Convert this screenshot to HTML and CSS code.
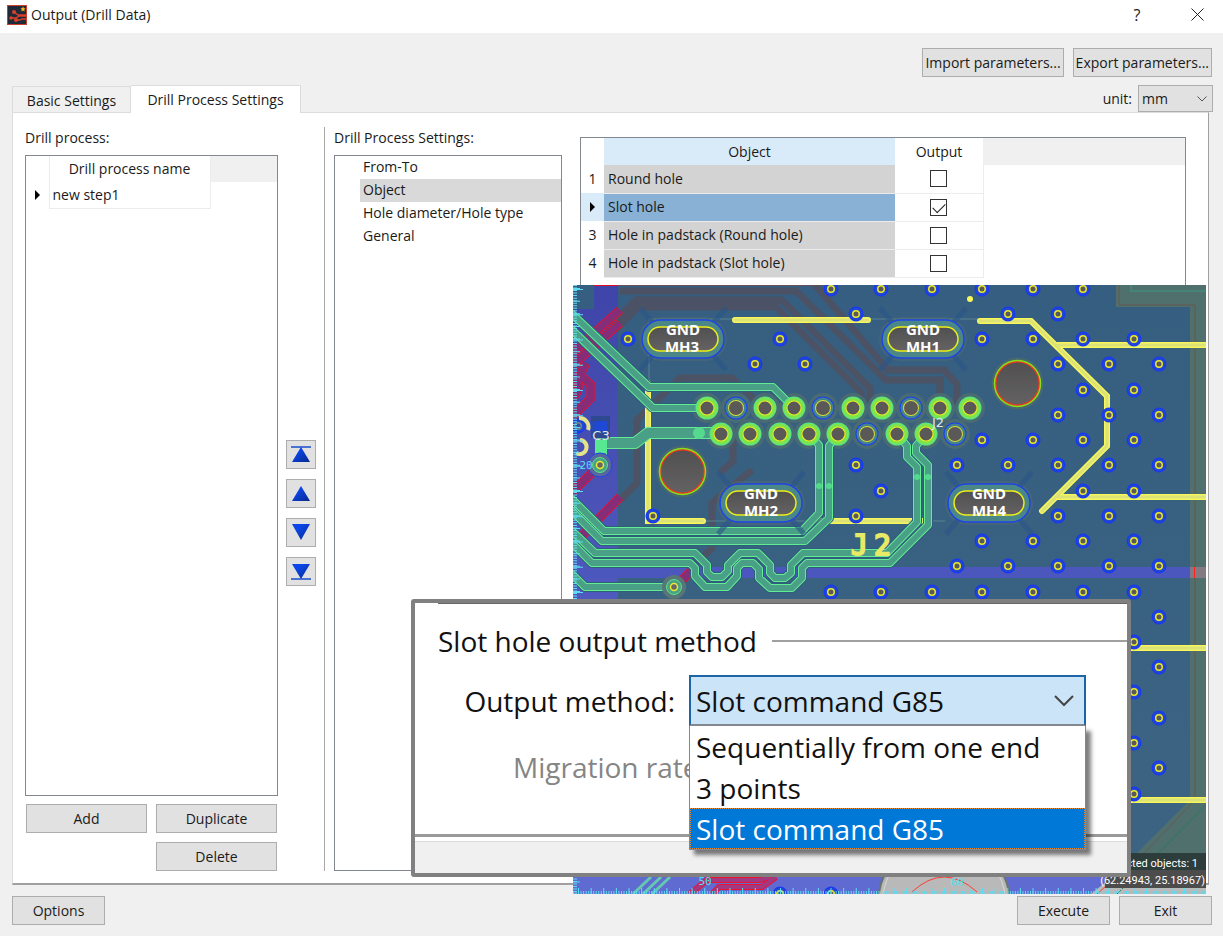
FILE: index.html
```html
<!DOCTYPE html>
<html lang="en">
<head>
    <meta charset="UTF-8">
    <meta name="viewport" content="width=device-width, initial-scale=1.0">
    <title>Output (Drill Data)</title>
    <link rel="stylesheet" href="styles.css">
</head>
<body>
    <header class="titlebar">
        <svg class="app-icon" viewBox="0 0 20 20">
            <rect x="0.5" y="0.5" width="19" height="19" fill="#202a36" stroke="#c8402f"/>
            <path d="M7 7l4 3h8M4 13h5l3-2h7M9 15h4l2-1h4" fill="none" stroke="#d8402c" stroke-width="1.3"/>
            <circle cx="7" cy="7" r="2" fill="#d8402c"/>
            <circle cx="4" cy="13" r="1.8" fill="#d8402c"/>
            <circle cx="9" cy="15" r="2" fill="#d8402c"/>
            <path d="M16 1.5l.8 1.6 1.7.3-1.2 1.2.3 1.8-1.6-.8-1.6.8.3-1.8-1.2-1.2 1.7-.3z" fill="#f5b51e"/>
        </svg>
        <h1 class="title">Output (Drill Data)</h1>
        <button type="button" class="title-btn" aria-label="Help">?</button>
        <button type="button" class="title-btn" aria-label="Close">
            <svg width="13" height="13" viewBox="0 0 13 13"><path d="M.5.5l12 12M12.5.5l-12 12" stroke="#222" fill="none"/></svg>
        </button>
    </header>

    <div class="toolbar">
        <button type="button" class="btn">Import parameters...</button>
        <button type="button" class="btn">Export parameters...</button>
    </div>

    <div class="tab-row">
        <button type="button" class="tab">Basic Settings</button>
        <button type="button" class="tab active">Drill Process Settings</button>
        <div class="unit">
            <label for="unit">unit:</label>
            <span class="select-wrap">
                <select id="unit" class="unit-select">
                    <option>mm</option>
                    <option>inch</option>
                </select>
                <svg class="chevron" width="10" height="6" viewBox="0 0 10 6"><path d="M.5.5L5 5 9.5.5" fill="none" stroke="#555"/></svg>
            </span>
        </div>
    </div>

    <main class="pane">
        <section class="process">
            <h2 class="label">Drill process:</h2>
            <div class="frame process-frame">
                <table class="grid process-grid">
                    <tr><th class="mark"></th><th class="name">Drill process name</th><th class="filler"></th></tr>
                    <tr><td class="mark"><span class="caret"></span></td><td class="name">new step1</td><td></td></tr>
                </table>
            </div>
            <div class="process-buttons">
                <button type="button" class="btn">Add</button>
                <button type="button" class="btn">Duplicate</button>
                <button type="button" class="btn second">Delete</button>
            </div>
        </section>

        <div class="movers">
            <button type="button" class="btn mover" aria-label="Move to top">
                <svg width="22" height="19" viewBox="0 0 22 19">
                    <defs>
                        <linearGradient id="blue" x1="0" y1="0" x2="1" y2="1">
                            <stop offset="0.3" stop-color="#0c46e8"/>
                            <stop offset="1" stop-color="#062a88"/>
                        </linearGradient>
                    </defs>
                    <path d="M1 2h20" stroke="#4b72d0" stroke-width="2"/><path d="M11 2l9 15H2z" fill="url(#blue)"/>
                </svg>
            </button>
            <button type="button" class="btn mover" aria-label="Move up">
                <svg width="22" height="19" viewBox="0 0 22 19"><path d="M11 2l9 15H2z" fill="url(#blue)"/></svg>
            </button>
            <button type="button" class="btn mover" aria-label="Move down">
                <svg width="22" height="19" viewBox="0 0 22 19"><path d="M11 17l9-16H2z" fill="url(#blue)"/></svg>
            </button>
            <button type="button" class="btn mover" aria-label="Move to bottom">
                <svg width="22" height="19" viewBox="0 0 22 19"><path d="M1 17h20" stroke="#4b72d0" stroke-width="2"/><path d="M11 17l9-15H2z" fill="url(#blue)"/></svg>
            </button>
        </div>

        <section class="settings">
            <h2 class="label">Drill Process Settings:</h2>
            <ul class="frame tree">
                <li>From-To</li>
                <li class="selected">Object</li>
                <li>Hole diameter/Hole type</li>
                <li>General</li>
            </ul>
        </section>

        <section class="frame objects">
            <table class="grid object-grid">
                <tr><th class="mark"></th><th class="object">Object</th><th class="output">Output</th><th class="filler"></th></tr>
                <tr><td class="mark">1</td><td class="object">Round hole</td><td class="output"><input type="checkbox" aria-label="Round hole"></td><td></td></tr>
                <tr class="current"><td class="mark"><span class="caret"></span></td><td class="object">Slot hole</td><td class="output"><input type="checkbox" aria-label="Slot hole" checked></td><td></td></tr>
                <tr><td class="mark">3</td><td class="object">Hole in padstack (Round hole)</td><td class="output"><input type="checkbox" aria-label="Hole in padstack (Round hole)"></td><td></td></tr>
                <tr><td class="mark">4</td><td class="object">Hole in padstack (Slot hole)</td><td class="output"><input type="checkbox" aria-label="Hole in padstack (Slot hole)"></td><td></td></tr>
            </table>
        </section>
    </main>

    <footer class="footer">
        <button type="button" class="btn">Options</button>
        <button type="button" class="btn push">Execute</button>
        <button type="button" class="btn">Exit</button>
    </footer>

    <!-- board view -->
    <svg class="board" viewBox="573 285 633 609">
        <defs>
            <linearGradient id="hole" x1="0" y1="0" x2="0" y2="1">
                <stop offset="0" stop-color="#515051"/>
                <stop offset="1" stop-color="#646262"/>
            </linearGradient>
            <linearGradient id="base" x1="0" y1="0" x2="0" y2="1">
                <stop offset="0" stop-color="#355e80"/>
                <stop offset="1" stop-color="#3d6482"/>
            </linearGradient>
            <linearGradient id="violet" x1="0" y1="0" x2="0" y2="1">
                <stop offset="0" stop-color="#3f45a8"/>
                <stop offset="1" stop-color="#5f6bd2"/>
            </linearGradient>
            <path id="vias" d="M831 289h0M881 289h0M932 289h0M982 289h0M1033 289h0M1083 289h0
                M856 314h0M1008 314h0M1058 314h0
                M628 339h0M780 339h0M982 339h0M1033 339h0M1083 339h0M1134 339h0
                M755 364h0M805 364h0M1058 364h0M1109 364h0M1159 364h0
                M1083 390h0M1134 390h0
                M1058 415h0M1109 415h0M1159 415h0
                M982 440h0M1033 440h0M1083 440h0M1134 440h0
                M856 465h0M957 465h0M1008 465h0M1058 465h0M1109 465h0M1159 465h0
                M881 491h0M1083 491h0M1134 491h0
                M653 516h0M856 516h0M1058 516h0M1109 516h0M1159 516h0
                M982 541h0M1033 541h0M1083 541h0M1134 541h0
                M957 566h0M1008 566h0M1058 566h0M1109 566h0M1159 566h0
                M831 592h0M881 592h0M932 592h0M982 592h0M1033 592h0M1083 592h0M1134 592h0
                M1159 617h0M1134 642h0M1159 667h0M1134 692h0M1159 718h0M1134 743h0M1159 768h0M1134 794h0
                M578 426h0M780 894h0M831 894h0"/>
            <path id="pads" d="M707 408h0M765 408h0M794 408h0M853 408h0M882 408h0M940 408h0M970 408h0
                M721 434h0M750 434h0M780 434h0M809 434h0M838 434h0M897 434h0M926 434h0"/>
            <path id="blue-pads" d="M736 408h0M823 408h0M911 408h0M867 434h0M955 434h0"/>
            <path id="traces" d="M571 313L649 387H773L794 408
                M571 329L653 408H707
                M571 498L604 531H802L819 513V445L809 434
                M571 510L602 541H805L829 518V446L838 434
                M571 530L595 553H695L707 565V572L712 577H722L728 571V565L740 553H758L770 565V573L775 578H785L791 573V565L803 553H887L917 522V467L907 457V446L897 434
                M571 542L592 563H690L695 568V576L705 587H727L737 576V568L742 563H753L759 569V578L770 588H792L802 578V568L807 563H890L928 525V465L916 453V446L926 434
                M571 573L585 587H674"/>
            <path id="wide-trace" d="M601 462V443H635L648 433H714"/>
            <path id="dim-traces" d="M612 324L636 300H782L870 388V405
                M615 330L638 307H776L861 392V405
                M620 291H796L886 380H940V405M815 285L888 370H944L957 384V405
                M733 434V461L720 473M752 470L712 503V548L695 565M637 460V420L680 378H732L755 400M637 460V483L620 500"/>
            <path id="red-traces" d="M573 352L620 310M573 365L620 323M586 363L580 375L591 385V398L573 416M573 375A14 14 0 0 1 573 397
                M571 493L598 467M571 547L620 497M678 584L697 565"/>
            <path id="outline" d="M735 320H868M980 321H1031L1107 396V446L1042 511M1058 345H1210M1058 497H1210M648 383V521H703M814 521H930M1120 648H1210M1120 800H1210"/>
            <g id="slot">
                <rect x="-3" y="-3" width="88" height="44" rx="22" fill="#506c70" opacity=".5"/>
                <path d="M10 2L-2-12M72 2L84-12M10 36L-2 50M72 36L84 50" stroke="#2b5689" stroke-width="5" opacity=".6"/>
                <rect width="82" height="38" rx="19" fill="#4b8787" stroke="#1f45e6" stroke-width="1.500"/>
                <rect x="6" y="7" width="70" height="24" rx="12" fill="url(#hole)" stroke="#efee16" stroke-width="1.500"/>
            </g>
        </defs>
        <rect x="573" y="285" width="633" height="609" fill="url(#base)"/>
        <rect x="573" y="285" width="45" height="609" fill="url(#violet)"/>
        <rect x="573" y="285" width="21" height="24" fill="#355e80"/>
        <path d="M594 285.500H618" stroke="#e01024"/>
        <path d="M618 285.500H822" stroke="#65505c"/>
        <rect x="573" y="567" width="617" height="11" fill="#4b57bd"/>
        <rect x="573" y="877" width="633" height="17" fill="#606bd2"/>
        <path d="M1116 285H1206V870H1120L1190 800V307H1116z" fill="#4f706d"/>
        <path d="M1119 285V305H1195V800L1131 867" fill="none" stroke="#6b5753" stroke-width="1"/>
        <path d="M1131 285V291H1206" fill="none" stroke="#458577" stroke-width="2"/>
        <path d="M1206 805L1142 870" stroke="#28785f"/>
        <rect x="1190" y="567" width="16" height="11" fill="#827b82"/>
        <path d="M1194.500 567V578" stroke="#ff2020"/>
        <g fill="none">
            <use href="#dim-traces" stroke="#544f5c" stroke-width="7" opacity=".75"/>
            <use href="#red-traces" stroke="#e01433" stroke-width="9"/>
            <use href="#red-traces" stroke="#852d78" stroke-width="7"/>
        </g>
        <path d="M649 319H1031L1107 396V446L1040 514M649 319V521H945" fill="none" stroke="#5b8290"/>
        <g fill="none" stroke-linecap="round">
            <g stroke="#496c72" stroke-width="30"><use href="#pads"/><use href="#blue-pads"/></g>
            <use href="#outline" stroke="#f7f75c" stroke-width="6"/>
            <use href="#outline" stroke="#dce276" stroke-width="3"/>
            <use href="#vias" stroke="#1b39f0" stroke-width="15"/>
            <use href="#vias" stroke="#2149cf" stroke-width="12"/>
            <use href="#vias" stroke="#ece92c" stroke-width="8"/>
            <use href="#vias" stroke="#59595a" stroke-width="5"/>
        </g>
        <g fill="none" stroke-linejoin="round">
            <use href="#traces" stroke="#2f5d7c" stroke-width="10"/>
            <use href="#traces" stroke="#64ec94" stroke-width="8"/>
            <use href="#traces" stroke="#4aa086" stroke-width="6"/>
            <use href="#wide-trace" stroke="#64ec94" stroke-width="12"/>
            <use href="#wide-trace" stroke="#4aa086" stroke-width="10"/>
        </g>
        <g fill="#55d98e">
            <circle cx="699" cy="433" r="6"/>
            <circle cx="819" cy="486" r="3"/><circle cx="829" cy="486" r="3"/>
            <circle cx="917" cy="477" r="3"/><circle cx="928" cy="477" r="3"/>
        </g>
        <g fill="none" stroke-linecap="round">
            <use href="#pads" stroke="#55e58c" stroke-width="23"/>
            <use href="#pads" stroke="#7de44c" stroke-width="21"/>
            <use href="#pads" stroke="#f0ee20" stroke-width="15"/>
            <use href="#pads" stroke="#5b5957" stroke-width="13"/>
            <use href="#blue-pads" stroke="#1d3ff0" stroke-width="23"/>
            <use href="#blue-pads" stroke="#43828c" stroke-width="21"/>
            <use href="#blue-pads" stroke="#d8dd34" stroke-width="16"/>
            <use href="#blue-pads" stroke="#5b5957" stroke-width="14"/>
        </g>
        <circle cx="1017.500" cy="383.500" r="26" fill="#48696f"/>
        <circle cx="1017.500" cy="383.500" r="22" fill="url(#hole)" stroke="#ee3322" stroke-width="2"/>
        <circle cx="1017.500" cy="383.500" r="23" fill="none" stroke="#86df18" stroke-width="1.500"/>
        <circle cx="682.500" cy="471.500" r="26" fill="#48696f"/>
        <circle cx="682.500" cy="471.500" r="22" fill="url(#hole)" stroke="#ee3322" stroke-width="2"/>
        <circle cx="682.500" cy="471.500" r="23" fill="none" stroke="#86df18" stroke-width="1.500"/>
        <circle cx="970" cy="299" r="3" fill="#f7f75c"/>
        <use href="#slot" x="642" y="320"/>
        <use href="#slot" x="882" y="320"/>
        <use href="#slot" x="720" y="484"/>
        <use href="#slot" x="948" y="484"/>

        <!-- C3 and the two free ends -->
        <rect x="591" y="416" width="19" height="22" fill="#2f4990"/>
        <rect x="596" y="421" width="11" height="10" fill="#1f49d5"/>
        <path d="M573 426H596" stroke="#2149d5" stroke-width="9" opacity=".6"/>
        <path d="M579 418A9 9 0 0 1 588 430M580 440A7 7 0 1 1 576 453" fill="none" stroke="#e5e38a" stroke-width="4"/>
        <rect x="595" y="440" width="12" height="13" fill="#58e892"/>
        <circle cx="600" cy="465" r="12" fill="#57699b" stroke="#2342f0"/>
        <circle cx="600" cy="465" r="7.500" fill="#4aa284" stroke="#5be28e"/>
        <circle cx="600" cy="465" r="3.500" fill="#686666" stroke="#ece92c" stroke-width="1.500"/>
        <circle cx="674" cy="587" r="12" fill="#587675"/>
        <circle cx="674" cy="587" r="7.500" fill="#4aa284" stroke="#5be28e"/>
        <circle cx="674" cy="587" r="3.500" fill="#686666" stroke="#ece92c" stroke-width="1.500"/>

        <!-- bottom strip -->
        <path d="M633 894L651 877M643 894L661 877M652 894L670 877" stroke="#62c9b0" stroke-width="3"/>
        <g fill="none">
            <path d="M690 894L707 880H760L770 877M712 894L719 887H762L776 877" stroke="#ec1230" stroke-width="6"/>
            <path d="M690 894L707 880H760L770 877M712 894L719 887H762L776 877" stroke="#a13a80" stroke-width="4"/>
        </g>
        <circle cx="944" cy="904" r="66" fill="#b9b9b9" stroke="#68746c" stroke-width="2"/>
        <circle cx="944" cy="904" r="62" fill="none" stroke="#d9dbd2"/>
        <path d="M912 892Q944 862 977 892" fill="none" stroke="#ff3b30"/>
        <path d="M1091 894L1112 877H1206V894z" fill="#b9b9b9"/>
        <path d="M1097 894L1116 877" stroke="#ff3b30"/>
        <path d="M1117 894L1134 877" stroke="#28785f"/>

        <!-- rulers -->
        <g stroke="#5cdcf0" fill="none">
            <path d="M575 285V894" stroke-width="4" stroke-dasharray="1 1.525"/>
            <path d="M576.500 288V894" stroke-width="7" stroke-dasharray="1 11.625"/>
            <path d="M578 288V894" stroke-width="10" stroke-dasharray="1 24.250" stroke-dashoffset="-1"/>
            <path d="M573 892.500H1206" stroke-width="3" stroke-dasharray="1 1.525"/>
            <path d="M578 891H1206" stroke-width="6" stroke-dasharray="1 11.625"/>
        </g>

        <g class="silk">
            <text x="683" y="335">GND</text><text x="682" y="352">MH3</text>
            <text x="923" y="335">GND</text><text x="923" y="352">MH1</text>
            <text x="761" y="499">GND</text><text x="761" y="516">MH2</text>
            <text x="989" y="499">GND</text><text x="989" y="516">MH4</text>
        </g>
        <text class="ref" x="601" y="440">C3</text>
        <text class="ref" x="938" y="427">J2</text>
        <text class="big-ref" x="851 874" y="555">J2</text>
        <text class="tick" x="586" y="469">20</text>
        <text class="tick" x="705" y="885">50</text>
        <text class="tick" x="957" y="886">60</text>
        <rect x="1060" y="853" width="146" height="17" fill="#2c3d3c"/>
        <rect x="1105" y="870" width="101" height="18" fill="#4c4c4c"/>
        <text class="status" x="1198" y="867">Selected objects: 1</text>
        <text class="status" x="1205" y="884">(62.24943, 25.18967)</text>
    </svg>

    <!-- enlarged slot hole settings -->
    <section class="callout">
        <div class="callout-body">
            <h2 class="group-title">Slot hole output method</h2>
            <div class="method-row">
                <label for="method">Output method:</label>
                <div class="method-box">
                    <select id="method" class="method-select">
                        <option>Sequentially from one end</option>
                        <option>3 points</option>
                        <option selected>Slot command G85</option>
                    </select>
                    <svg class="chevron" width="20" height="12" viewBox="0 0 20 12"><path d="M1 1l9 9 9-9" fill="none" stroke="#444" stroke-width="2"/></svg>
                    <ul class="method-list">
                        <li>Sequentially from one end</li>
                        <li>3 points</li>
                        <li class="chosen">Slot command G85</li>
                    </ul>
                </div>
            </div>
            <div class="rate-row">Migration rate</div>
        </div>
        <div class="callout-foot"></div>
    </section>
</body>
</html>
```
FILE: styles.css
```css
* {
    box-sizing: border-box;
}

body {
    position: relative;
    display: flex;
    flex-direction: column;
    min-height: 100vh;
    margin: 0;
    background-color: #f0f0f0;
    color: #1a1a1a;
    font-family: "Open Sans", "Noto Sans", sans-serif;
    font-size: 14px;
    line-height: 22px;
}

button, select {
    font: inherit;
    color: inherit;
}

h1, h2 {
    margin: 0;
    font-size: 14px;
    font-weight: normal;
}

ul {
    margin: 0;
    padding: 0;
    list-style: none;
}

.titlebar {
    display: flex;
    align-items: center;
    height: 33px;
    padding: 0 10px 4px 7px;
    background-color: #ffffff;
}

.app-icon {
    width: 20px;
    height: 20px;
    margin-right: 4px;
}

.title {
    flex: 1;
}

.title-btn {
    display: flex;
    align-items: center;
    justify-content: center;
    width: 32px;
    margin-left: 28px;
    padding: 0;
    border: none;
    background: none;
    font-size: 16px;
}

.btn {
    height: 29px;
    padding: 1px 2px 0;
    border: 1px solid #adadad;
    background-color: #e1e1e1;
    white-space: nowrap;
}

.toolbar {
    display: flex;
    justify-content: flex-end;
    gap: 9px;
    padding: 15px 11px 8px;
}

.tab-row {
    display: flex;
    align-items: flex-end;
    padding: 0 10px 0 12px;
}

.tab {
    width: 119px;
    height: 26px;
    padding: 2px 0 0;
    border: 1px solid #dcdcdc;
    border-bottom: none;
    background-color: #f0f0f0;
}

.tab.active {
    z-index: 1;
    width: 170px;
    height: 28px;
    margin-bottom: -1px;
    padding: 0;
    border-left: none;
    background-color: #ffffff;
}

.unit {
    display: flex;
    align-items: center;
    gap: 6px;
    margin-left: auto;
}

.select-wrap {
    position: relative;
}

.chevron {
    position: absolute;
    top: 50%;
    right: 6px;
    margin-top: -3px;
    pointer-events: none;
}

.unit-select {
    display: block;
    width: 75px;
    height: 27px;
    padding: 1px 3px 0;
    border: 1px solid #adadad;
    border-radius: 0;
    background-color: #e1e1e1;
    appearance: none;
}

.pane {
    display: flex;
    flex: 1;
    margin: 0 14px 0 12px;
    padding: 14px 22px 12px 12px;
    border: 1px solid #dcdcdc;
    border-right-color: #a0a0a0;
    border-bottom: 2px solid #a0a0a0;
    background-color: #ffffff;
}

.label {
    margin-bottom: 6px;
}

.frame {
    border: 1px solid #828790;
    background-color: #ffffff;
}

.process {
    display: flex;
    flex-direction: column;
    width: 253px;
}

.process-frame {
    flex: 1;
}

.grid {
    width: 100%;
    border-collapse: collapse;
    table-layout: fixed;
}

.grid th {
    font-weight: normal;
}

.grid th, .grid td {
    padding: 0;
}

.grid .filler {
    background-color: #f0f0f0;
}

.grid .mark {
    width: 23px;
    text-align: center;
}

.caret {
    display: inline-block;
    border: 5px solid transparent;
    border-right: none;
    border-left-color: #000000;
}

.process-grid tr {
    height: 26px;
}

.process-grid .name {
    width: 161px;
    border: solid #ececec;
    border-width: 0 1px;
}

.process-grid td.name {
    padding-left: 3px;
    border-bottom-width: 1px;
}

.process-buttons {
    display: grid;
    grid-template-columns: 1fr 1fr;
    gap: 9px;
    padding: 8px 1px 0;
}

.second {
    grid-column: 2;
}

.movers {
    display: flex;
    flex-direction: column;
    justify-content: center;
    gap: 10px;
    padding: 28px 8px 0;
}

.mover {
    display: flex;
    align-items: center;
    justify-content: center;
    width: 30px;
    padding: 0;
}

.settings {
    display: flex;
    flex-direction: column;
    width: 238px;
    padding-left: 9px;
    border-left: 1px solid #a8a8a8;
}

.tree {
    flex: 1;
}

.tree li {
    height: 23px;
    margin-left: 25px;
    padding-left: 3px;
}

.tree .selected {
    background-color: #d9d9d9;
}

.objects {
    flex: 1;
    margin: 10px 0 0 18px;
}

.object-grid tr {
    height: 28px;
}

.object-grid tr:first-child {
    height: 27px;
}

.object-grid .object {
    width: 291px;
}

.object-grid th.object, .current .mark {
    background-color: #d9ebf9;
}

.object-grid td.object {
    padding-left: 4px;
    border-bottom: 1px solid #ececec;
    background-color: #d3d3d3;
}

.object-grid .current .object {
    background-color: #88b1d5;
}

.object-grid .output {
    width: 88px;
    text-align: center;
}

.object-grid td.output {
    border: solid #ececec;
    border-width: 0 1px 1px 0;
}

.output input {
    display: block;
    width: 17px;
    height: 17px;
    margin: 0 auto;
    border: 1px solid #333333;
    background-color: #ffffff;
    appearance: none;
}

.output input:checked::after {
    content: "";
    display: block;
    width: 11px;
    height: 6px;
    margin: 3px 0 0 2px;
    border: solid #222222;
    border-width: 0 0 1px 1px;
    transform: rotate(-45deg);
}

.footer {
    display: flex;
    gap: 9px;
    padding: 11px 11px 11px 12px;
}

.footer .btn {
    width: 93px;
}

.push {
    margin-left: auto;
}

.board {
    position: absolute;
    right: 17px;
    bottom: 42px;
    width: 633px;
    height: 609px;
}

.silk {
    fill: #ffffff;
    font: bold 15px "Noto Sans", sans-serif;
    text-anchor: middle;
}

.ref {
    fill: #dfe6ee;
    font: 13px "DejaVu Sans", sans-serif;
    text-anchor: middle;
}

.big-ref {
    fill: #e8e966;
    stroke: #e8e966;
    stroke-width: 2px;
    font: 28px "DejaVu Sans Mono", monospace;
}

.tick {
    fill: #5cdcf0;
    font: 11px "DejaVu Sans Mono", monospace;
    text-anchor: middle;
}

.status {
    fill: #ffffff;
    font: 11px Roboto, sans-serif;
    text-anchor: end;
}

.callout {
    position: absolute;
    right: 92px;
    bottom: 59px;
    width: 720px;
    border: 4px solid #808080;
    border-radius: 3px;
    background-color: #ffffff;
    color: #111111;
    font-size: 28px;
    line-height: 40px;
}

.callout-body {
    height: 231px;
    margin-left: 23px;
    padding-top: 17px;
    border-top: 1px solid #666666;
}

.group-title {
    display: flex;
    align-items: center;
    gap: 15px;
    font-size: 28px;
}

.group-title::after {
    content: "";
    flex: 1;
    height: 2px;
    background-color: #a0a0a0;
}

.method-row {
    display: flex;
    align-items: center;
    justify-content: flex-end;
    gap: 14px;
    margin: 14px 41px 0 0;
}

.method-box {
    position: relative;
    width: 397px;
}

.method-box .chevron {
    right: 12px;
    margin-top: -6px;
}

.method-select {
    display: block;
    width: 100%;
    height: 51px;
    padding: 0 5px;
    border: 2px solid #1c66a8;
    border-bottom-color: #828790;
    border-radius: 0;
    background-color: #cce4f7;
    appearance: none;
}

.method-list {
    position: absolute;
    top: 100%;
    width: 100%;
    border: solid #828790;
    border-width: 0 1px 1px;
    background-color: #ffffff;
    box-shadow: 5px 5px 4px rgba(0, 0, 0, 0.5);
}

.method-list li {
    height: 41px;
    padding-left: 6px;
    line-height: 42px;
}

.method-list .chosen {
    outline: 1px dotted #e08a3a;
    outline-offset: -1px;
    background-color: #0078d7;
    color: #ffffff;
}

.rate-row {
    margin-top: 21px;
    padding-left: 75px;
    color: #858585;
}

.callout-foot {
    height: 39px;
    border-top: 3px solid #9a9a9a;
    background: linear-gradient(#ffffff 4px, #dcdcdc 4px, #dcdcdc 5px, #f0f0f0 5px);
}
```
